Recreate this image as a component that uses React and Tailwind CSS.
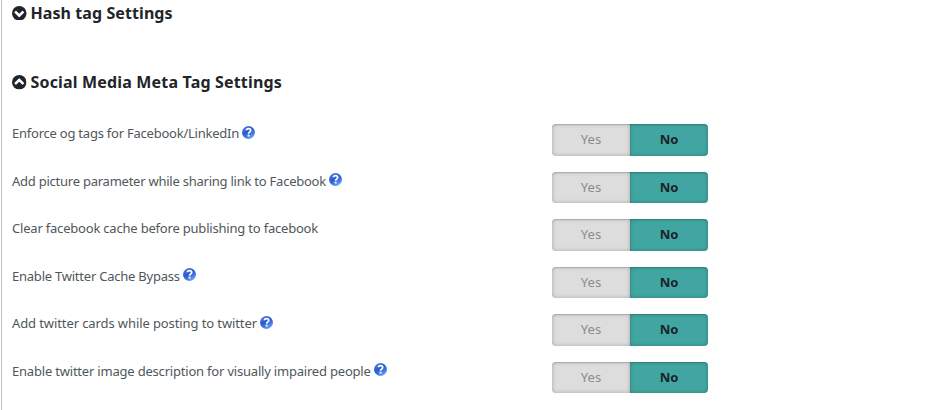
import React from 'react'

const settings = [
  { label: 'Enforce og tags for Facebook/LinkedIn', help: true, spacing: 'tracking-[-0.23px]' },
  { label: 'Add picture parameter while sharing link to Facebook', help: true, spacing: 'tracking-[-0.24px]' },
  { label: 'Clear facebook cache before publishing to facebook', help: false, spacing: 'tracking-[-0.2px]' },
  { label: 'Enable Twitter Cache Bypass', help: true, spacing: 'tracking-[-0.23px]' },
  { label: 'Add twitter cards while posting to twitter', help: true, spacing: 'tracking-[-0.1px]' },
  { label: 'Enable twitter image description for visually impaired people', help: true, spacing: 'tracking-[-0.2px]' },
];

const ChevronCircle = (props) => {
  const { open } = props;

  return (
    <svg viewBox="0 128 1536 1536" className={`h-[14.5px] w-[14.5px] shrink-0 ${open ? 'rotate-180' : ''}`}>
      <circle cx="768" cy="896" r="768" fill="currentColor" />
      <path
        d="M813 1299l454-454q19-19 19-45t-19-45l-102-102q-19-19-45-19t-45 19l-307 307-307-307q-19-19-45-19t-45 19l-102 102q-19 19-19 45t19 45l454 454q19 19 45 19t45-19z"
        fill="#fff"
      />
    </svg>
  );
}

const HelpIcon = () => (
  <svg viewBox="0 0 13 13" className="mb-[4px] ml-[3px] h-[13px] w-[13px] shrink-0">
    <defs>
      <linearGradient id="help-fill" x1="0.2" y1="0" x2="0.8" y2="1">
        <stop offset="0" stopColor="#4f7fdd" />
        <stop offset="0.4" stopColor="#2b5bd0" />
        <stop offset="0.65" stopColor="#3f74dd" />
        <stop offset="1" stopColor="#7db6fa" />
      </linearGradient>
    </defs>
    <circle cx="6.5" cy="6.5" r="6.5" fill="url(#help-fill)" />
    <path d="M4.4 4.3C4.5 2 8.7 2 8.7 4.4C8.7 5.8 6.6 5.9 6.6 7.7" fill="none" stroke="#fff" strokeWidth="1.7" />
    <rect x="5.6" y="8.7" width="2" height="1.8" fill="#fff" />
  </svg>
);

const YesNoSwitch = () => (
  <div className="flex h-[31.5px] w-[156px] text-[13px]">
    <button className="w-[78px] rounded-l-[4px] bg-[#dddddd] text-[#8c8c8c] shadow-[inset_0_1px_1px_rgba(0,0,0,0.14),inset_0_0_4px_rgba(0,0,0,0.24)]">
      Yes
    </button>
    <button className="w-[78px] rounded-r-[4px] bg-[#41a6a1] font-bold text-[#1c2226] shadow-[inset_0_1px_1px_rgba(0,0,0,0.14),inset_0_0_4px_rgba(0,0,0,0.24)]">
      No
    </button>
  </div>
);

const SettingRow = (props) => {
  const { label, help, spacing } = props;

  return (
    <div className="flex h-[47.5px] items-start">
      <div className="flex h-[20px] w-[540px] items-center text-[13px] text-[#50575b]">
        <span className={`whitespace-nowrap ${spacing}`}>{label}</span>
        {help && <HelpIcon />}
      </div>
      <YesNoSwitch />
    </div>
  );
}

const App = () => {
  return (
    <div className="h-[410px] w-[935px] overflow-hidden bg-white pl-px font-['Noto_Sans',sans-serif]">
      <div className="h-full border-l border-[#c3c3c3] pl-[10px]">
        <h3 className="flex h-[26px] items-center gap-[4px] text-[16px] font-bold text-[#212529]">
          <ChevronCircle open={false} />
          <span className="tracking-[0.08px]">Hash tag Settings</span>
        </h3>
        <h3 className="mt-[43px] flex h-[26px] items-center gap-[4px] text-[16px] font-bold text-[#212529]">
          <ChevronCircle open={true} />
          <span className="tracking-[0.17px]">Social Media Meta Tag Settings</span>
        </h3>
        <div className="mt-[29px]">
          {settings.map((item) => (
            <SettingRow key={item.label} {...item} />
          ))}
        </div>
      </div>
    </div>
  )
}

export default App;
